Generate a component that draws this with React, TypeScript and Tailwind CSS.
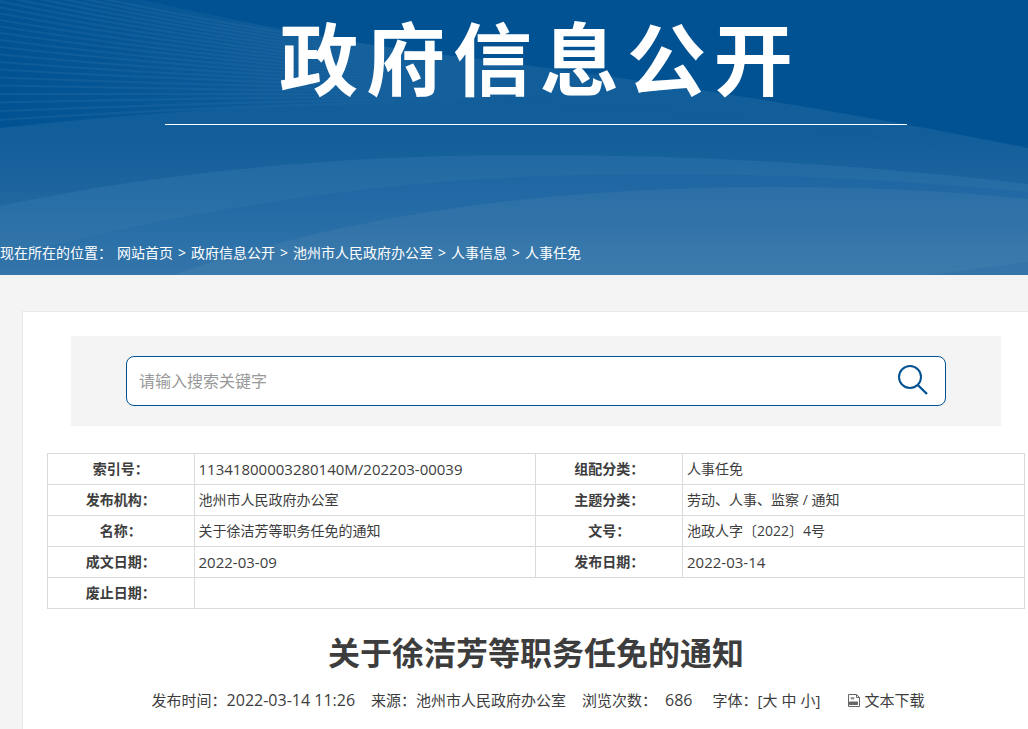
import { Fragment } from 'react';

const crumbs = ['网站首页', '政府信息公开', '池州市人民政府办公室', '人事信息', '人事任免'];

const rows = [
  ['索引号：', '11341800003280140M/202203-00039', '组配分类：', '人事任免'],
  ['发布机构：', '池州市人民政府办公室', '主题分类：', '劳动、人事、监察 / 通知'],
  ['名称：', '关于徐洁芳等职务任免的通知', '文号：', '池政人字〔2022〕4号'],
  ['成文日期：', '2022-03-09', '发布日期：', '2022-03-14'],
];

// fan of thin lines in the upper left of the banner
const fan = Array.from({ length: 22 }, (_, i) => {
  const start = 120 - i * 9 + i * i * 0.1;
  const mid = 104 - i * 3.2;
  const end = 101 - i * 1.7;
  return `M0 ${start} C150 ${start * 0.4 + mid * 0.6} 330 ${mid * 0.7 + end * 0.3 - 2} 514 ${end}`;
});

function BannerWaves() {
  return (
    <svg
      className="absolute inset-0 h-full w-full"
      viewBox="0 0 1028 275"
      preserveAspectRatio="none"
      aria-hidden="true"
    >
      <defs>
        <linearGradient id="base" x1="0" y1="0" x2="0" y2="1">
          <stop offset="0" stopColor="#005293" />
          <stop offset="0.5" stopColor="#005293" />
          <stop offset="1" stopColor="#21679f" />
        </linearGradient>
        <linearGradient id="fade" x1="0" y1="0" x2="1" y2="0">
          <stop offset="0" stopColor="#fff" stopOpacity="0" />
          <stop offset="0.35" stopColor="#fff" stopOpacity="0.07" />
          <stop offset="1" stopColor="#fff" stopOpacity="0.07" />
        </linearGradient>
        <linearGradient id="lines" gradientUnits="userSpaceOnUse" x1="0" y1="0" x2="514" y2="0">
          <stop offset="0" stopColor="#fff" stopOpacity="0.05" />
          <stop offset="0.5" stopColor="#fff" stopOpacity="0.04" />
          <stop offset="1" stopColor="#fff" stopOpacity="0" />
        </linearGradient>
        <linearGradient id="shade" x1="0" y1="0" x2="0" y2="1">
          <stop offset="0" stopColor="#0e5aa0" stopOpacity="0.3" />
          <stop offset="1" stopColor="#0e5aa0" stopOpacity="0.05" />
        </linearGradient>
      </defs>
      <rect width="1028" height="275" fill="url(#base)" />
      <path
        d="M143 0 C240 22 330 40 446 55 C640 78 850 112 1028 148 V160 C850 132 690 108 514 102 C380 98 180 108 0 128 V0 Z"
        fill="url(#fade)"
      />
      <g fill="none" stroke="url(#lines)" strokeWidth="2">
        {fan.map((d) => (
          <path key={d} d={d} />
        ))}
      </g>
      <path d="M0 128 C180 108 380 98 514 102 C690 108 850 132 1028 160 V275 H0 Z" fill="#fff" fillOpacity="0.07" />
      <path d="M0 206 C160 172 340 155 530 155 C700 155 870 165 1028 184 V275 H0 Z" fill="#5290c4" fillOpacity="0.2" />
      <path d="M0 258 C240 196 440 174 650 174 C790 174 910 180 1028 192 V275 H0 Z" fill="url(#shade)" />
      <path d="M173 275 C360 210 560 187 780 187 C870 187 950 191 1028 199 V275 Z" fill="#7aa3bd" fillOpacity="0.13" />
      <path d="M930 275 C965 270 1000 266 1028 262 V275 Z" fill="#0e5aa0" fillOpacity="0.15" />
    </svg>
  );
}

function SearchBox() {
  return (
    <form
      onSubmit={(e) => e.preventDefault()}
      className="mx-6 bg-[#f4f4f4] px-[55px] py-5"
    >
      <div className="flex h-[50px] items-center rounded-lg border border-[#005293] bg-white pr-4 pl-3">
        <input
          type="text"
          aria-label="搜索关键字"
          placeholder="请输入搜索关键字"
          className="min-w-0 flex-1 bg-transparent text-base text-[#3d3d3d] outline-none placeholder:text-[#999]"
        />
        <button type="submit" aria-label="搜索" className="shrink-0">
          <svg className="block size-8" viewBox="0 0 32 32" fill="none" stroke="#005293" strokeWidth="2">
            <circle cx="13" cy="12" r="11" />
            <path d="M20.8 20 L30 29" strokeWidth="2.4" />
          </svg>
        </button>
      </div>
    </form>
  );
}

function InfoValue({ text }: { text: string }) {
  // plain numbers are set a little larger than the Chinese text
  return /^[\x20-\x7e]+$/.test(text) ? <span className="text-[15px]">{text}</span> : <>{text}</>;
}

function InfoTable() {
  return (
    <table className="mt-[27px] w-full table-fixed border-collapse text-sm leading-5">
      <colgroup>
        <col className="w-[15%]" />
        <col className="w-[35%]" />
        <col className="w-[15%]" />
        <col className="w-[35%]" />
      </colgroup>
      <tbody>
        {rows.map(([labelA, valueA, labelB, valueB]) => (
          <tr key={labelA} className="h-[31px]">
            <th scope="row" className="border border-[#dadada] font-bold">{labelA}</th>
            <td className="border border-[#dadada] px-1">
              <InfoValue text={valueA} />
            </td>
            <th scope="row" className="border border-[#dadada] font-bold">{labelB}</th>
            <td className="border border-[#dadada] px-1">
              <InfoValue text={valueB} />
            </td>
          </tr>
        ))}
        <tr className="h-[31px]">
          <th scope="row" className="border border-[#dadada] font-bold">废止日期：</th>
          <td colSpan={3} className="border border-[#dadada] px-1" />
        </tr>
      </tbody>
    </table>
  );
}

function ArticleMeta() {
  return (
    <div className="mt-[11px] flex items-center justify-center gap-4 pl-1 text-[15px] leading-6 whitespace-nowrap">
      <span className="flex">
        发布时间：
        <span className="text-base">2022-03-14 11:26</span>
      </span>
      <span>来源：池州市人民政府办公室</span>
      <span className="flex gap-2">
        <span>浏览次数：</span>
        <span className="text-base">686</span>
      </span>
      <span className="flex pl-1">
        字体：[
        <span className="flex gap-1">
          <button type="button">大</button>
          <button type="button">中</button>
          <button type="button">小</button>
        </span>
        ]
      </span>
      <a href="#download" className="flex items-center gap-1 pl-3">
        <svg className="h-[13px] w-3" viewBox="0 0 12 13" fill="none" stroke="#666">
          <path d="M0.5 0.5 H8.5 L11.5 3.5 V12.5 H0.5 Z" />
          <path d="M8.5 0.5 V3.5 H11.5" />
          <path d="M3 3.5 H6 V5 H3 Z" fill="#999" stroke="#999" />
          <path d="M1.5 8 H9.5 V10.5 H1.5 Z" fill="#666" />
        </svg>
        文本下载
      </a>
    </div>
  );
}

export default function App() {
  return (
    <div className="min-h-screen overflow-x-hidden bg-[#f4f4f4] font-['Open_Sans','Noto_Sans_CJK_SC',sans-serif] text-[#3d3d3d]">
      {/* Banner */}
      <header className="relative h-[275px] overflow-hidden text-white">
        <BannerWaves />
        <div className="relative flex h-full flex-col justify-between">
          <div className="pl-11">
            <div className="mx-auto w-[742px] border-b border-white text-center">
              <h1 className="h-[124px] pl-2 text-[79px] leading-[120px] font-bold tracking-widest whitespace-nowrap">
                政府信息公开
              </h1>
            </div>
          </div>
          <nav aria-label="现在所在的位置" className="flex gap-[5px] pb-3 text-sm leading-5 whitespace-nowrap">
            <span>现在所在的位置：</span>
            {crumbs.map((name, i) => (
              <Fragment key={name}>
                {i > 0 && <span>&gt;</span>}
                <a href="#">{name}</a>
              </Fragment>
            ))}
          </nav>
        </div>
      </header>

      {/* Content card */}
      <main className="mt-9 ml-[22px] min-h-[418px] border-t border-l border-[#e8e8e8] bg-white pt-6 pr-[3px] pl-6">
        <SearchBox />
        <InfoTable />
        <h2 className="mt-5 text-center text-[32px] leading-[48px] font-bold">关于徐洁芳等职务任免的通知</h2>
        <ArticleMeta />
      </main>
    </div>
  );
}
